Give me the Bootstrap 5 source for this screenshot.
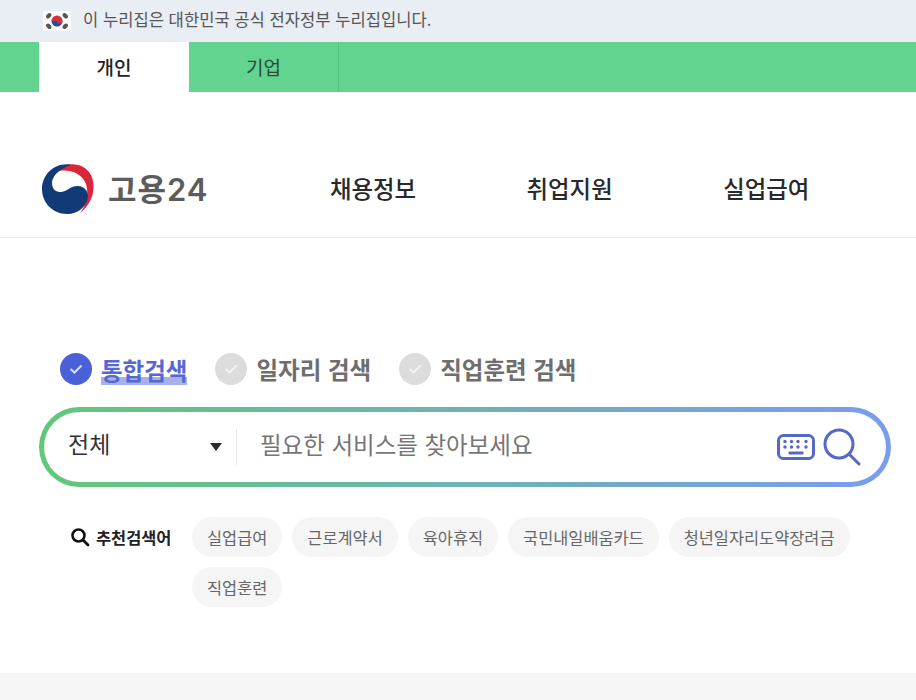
<!DOCTYPE html>
<html lang="ko">
<head>
  <meta charset="UTF-8" />
  <title>고용24</title>
  <meta name="viewport" content="width=device-width, initial-scale=1" />
  <link href="https://cdn.jsdelivr.net/npm/bootstrap@5.3.3/dist/css/bootstrap.min.css" rel="stylesheet" />
  <style>
    body {
      font-family: "Noto Sans CJK KR", "Noto Sans", sans-serif;
      background-color: #fff;
      color: #222;
      height: 700px;
      overflow: hidden;
    }
    .gov-bar {
      height: 42px;
      padding-left: 43px;
      background-color: #e9edf4;
      color: #555;
      font-size: 16.6px;
    }
    .gov-bar svg { margin-right: 12px; }
    .gov-bar span { margin-top: -3px; }
    .member-tabs {
      height: 50px;
      padding-left: 39px;
      background-color: #62d48f;
    }
    .member-tab {
      width: 150px;
      font-size: 19px;
      color: #2b4a38;
      border-right: 1px solid #55c280;
    }
    .member-tab.on {
      background-color: #fff;
      color: #222;
      font-weight: 500;
      border-right: 0;
    }
    .site-head {
      height: 146px;
      padding: 49px 0 0 41px;
      border-bottom: 1px solid #ececec;
    }
    .logo-word {
      width: 112px;
      margin-left: 13px;
      color: #5c5c5c;
      font-family: Inter, "Noto Sans CJK KR", sans-serif;
      font-size: 31px;
      font-weight: 600;
      letter-spacing: 1px;
      line-height: 1;
    }
    .main-menu {
      margin-left: 110px;
      gap: 110.500px;
      font-size: 23.400px;
      font-weight: 500;
      color: #2a2a2a;
    }
    .search-area { padding: 113px 25px 0 39px; }
    .search-kinds {
      height: 36px;
      padding-left: 21px;
      gap: 28px;
      font-size: 23.500px;
      font-weight: 700;
      color: #6e6e6e;
    }
    .kind-check {
      width: 32px;
      height: 32px;
      margin-right: 9px;
      border-radius: 50%;
      background-color: #dcdcdc;
    }
    .kind-label { margin-top: 2px; }
    .kind-item.on { color: #5468d4; }
    .kind-item.on .kind-check { background-color: #4a60d8; }
    .kind-item.on .kind-label {
      background: linear-gradient(transparent 72%, #a6b2ec 72%);
      line-height: 30px;
    }
    .search-box {
      height: 80px;
      margin-top: 20px;
      padding: 0 25px 0 24px;
      border: 5px solid transparent;
      border-radius: 40px;
      background: linear-gradient(#fff, #fff) padding-box,
        linear-gradient(90deg, #62c878, #7a9cf0) border-box;
    }
    .scope-select {
      width: 169px;
      height: 36px;
      padding-right: 14px;
      border-right: 1px solid #e6e6e6;
      font-size: 23px;
      color: #333;
    }
    .scope-select span:first-child { margin-top: -7px; }
    .scope-caret {
      width: 0;
      height: 0;
      border-left: 6.500px solid transparent;
      border-right: 6.500px solid transparent;
      border-top: 8px solid #2a2a2a;
    }
    .search-hint {
      margin-top: -5px;
      padding-left: 23px;
      font-size: 23.500px;
      color: #767676;
    }
    .reco-row {
      margin-top: 30px;
      padding-left: 31px;
    }
    .reco-title {
      width: 122px;
      height: 40px;
      font-size: 16.400px;
      font-weight: 700;
      color: #222;
    }
    .reco-title svg { margin-right: 6px; }
    .reco-chips { gap: 10px; width: 680px; }
    .reco-chip {
      height: 40px;
      padding: 0 15px;
      border-radius: 20px;
      background-color: #f5f5f5;
      color: #666;
      font-size: 16.400px;
    }
    .page-foot {
      position: absolute;
      left: 0;
      right: 0;
      top: 673px;
      height: 27px;
      background-color: #f5f5f5;
    }
  </style>
</head>
<body>
  <!-- gov banner -->
  <div class="gov-bar d-flex align-items-center">
    <svg width="28" height="20" viewBox="0 0 28 20">
      <rect width="28" height="20" fill="#fbfbfd"/>
      <path d="M8.500 10a5.500 5.500 0 0 1 11 0z" fill="#d0323f"/>
      <path d="M8.500 10a5.500 5.500 0 0 0 11 0z" fill="#1d4f9f"/>
      <path d="M8.500 10a2.750 2.750 0 0 1 5.500 0a2.750 2.750 0 0 0 5.500 0z" fill="#d0323f"/>
      <g stroke="#555" stroke-width="4" stroke-linecap="round">
        <path d="M5 5.500l1.500-1.500"/>
        <path d="M21.500 4l1.500 1.500"/>
        <path d="M5 14.500l1.500 1.500"/>
        <path d="M21.500 16l1.500-1.500"/>
      </g>
    </svg>
    <span>이 누리집은 대한민국 공식 전자정부 누리집입니다.</span>
  </div>

  <!-- member tabs -->
  <div class="member-tabs d-flex">
    <div class="member-tab on d-flex align-items-center justify-content-center">개인</div>
    <div class="member-tab d-flex align-items-center justify-content-center">기업</div>
  </div>

  <!-- header -->
  <div class="site-head d-flex align-items-center">
    <div class="d-flex align-items-center">
      <svg width="54" height="52" viewBox="0 0 54 52">
        <path d="M18 5C30 -2 44 1 50 12C56 25 51 41 39 50C46 41 48 31 45 21C41 10 28 6 18 8z" fill="#d9263a"/>
        <path d="M30 1.500C14 -1 1 11 1 26C1 40 12 51 26 51C38 51 46 43 47 33C47 27 42 22.500 36 23C29 23.500 27 28 20 29C14 29.500 10.500 25 11 19C12 12 19 6 30 1.500z" fill="#123a77"/>
      </svg>
      <span class="logo-word">고용24</span>
    </div>
    <nav class="main-menu d-flex">
      <span>채용정보</span>
      <span>취업지원</span>
      <span>실업급여</span>
    </nav>
  </div>

  <!-- search -->
  <div class="search-area">
    <div class="search-kinds d-flex align-items-center">
      <div class="kind-item on d-flex align-items-center">
        <span class="kind-check d-flex align-items-center justify-content-center">
          <svg width="16" height="12" viewBox="0 0 16 12"><path d="M2.500 6l4 3.500 7-7" fill="none" stroke="#d5dcf8" stroke-width="2.200"/></svg>
        </span>
        <span class="kind-label">통합검색</span>
      </div>
      <div class="kind-item d-flex align-items-center">
        <span class="kind-check d-flex align-items-center justify-content-center">
          <svg width="16" height="12" viewBox="0 0 16 12"><path d="M2.500 6l4 3.500 7-7" fill="none" stroke="#f2f2f2" stroke-width="2.200"/></svg>
        </span>
        <span class="kind-label">일자리 검색</span>
      </div>
      <div class="kind-item d-flex align-items-center">
        <span class="kind-check d-flex align-items-center justify-content-center">
          <svg width="16" height="12" viewBox="0 0 16 12"><path d="M2.500 6l4 3.500 7-7" fill="none" stroke="#f2f2f2" stroke-width="2.200"/></svg>
        </span>
        <span class="kind-label">직업훈련 검색</span>
      </div>
    </div>

    <div class="search-box d-flex align-items-center">
      <div class="scope-select d-flex align-items-center justify-content-between">
        <span>전체</span>
        <span class="scope-caret"></span>
      </div>
      <div class="search-hint flex-grow-1">필요한 서비스를 찾아보세요</div>
      <svg class="me-2" width="38" height="26" viewBox="0 0 38 26">
        <rect x="1.500" y="1.500" width="35" height="23" rx="5" fill="#fff" stroke="#5468c8" stroke-width="3"/>
        <g fill="#5468c8">
          <circle cx="8" cy="7.500" r="1.700"/><circle cx="14.500" cy="7.500" r="1.700"/><circle cx="21" cy="7.500" r="1.700"/><circle cx="29" cy="7.500" r="1.700"/>
          <circle cx="8" cy="13" r="1.700"/><circle cx="14.500" cy="13" r="1.700"/><circle cx="21" cy="13" r="1.700"/><circle cx="29" cy="13" r="1.700"/>
          <rect x="11.500" y="17.500" width="15" height="3" rx="1"/>
        </g>
      </svg>
      <svg width="38" height="38" viewBox="0 0 38 38">
        <circle cx="16" cy="16" r="14" fill="none" stroke="#5468c8" stroke-width="3"/>
        <path d="M26.500 26.500L36 36" stroke="#5468c8" stroke-width="3" stroke-linecap="round"/>
      </svg>
    </div>

    <div class="reco-row d-flex">
      <div class="reco-title d-flex align-items-center">
        <svg width="20" height="20" viewBox="0 0 20 20">
          <circle cx="8.500" cy="8.500" r="6" fill="none" stroke="#111" stroke-width="2.600"/>
          <path d="M13 13l5 5" stroke="#111" stroke-width="2.800" stroke-linecap="round"/>
        </svg>
        추천검색어
      </div>
      <div class="reco-chips d-flex flex-wrap">
        <span class="reco-chip d-flex align-items-center">실업급여</span>
        <span class="reco-chip d-flex align-items-center">근로계약서</span>
        <span class="reco-chip d-flex align-items-center">육아휴직</span>
        <span class="reco-chip d-flex align-items-center">국민내일배움카드</span>
        <span class="reco-chip d-flex align-items-center">청년일자리도약장려금</span>
        <span class="reco-chip d-flex align-items-center">직업훈련</span>
      </div>
    </div>
  </div>

  <div class="page-foot"></div>

  <script src="https://cdn.jsdelivr.net/npm/bootstrap@5.3.3/dist/js/bootstrap.bundle.min.js"></script>
</body>
</html>
